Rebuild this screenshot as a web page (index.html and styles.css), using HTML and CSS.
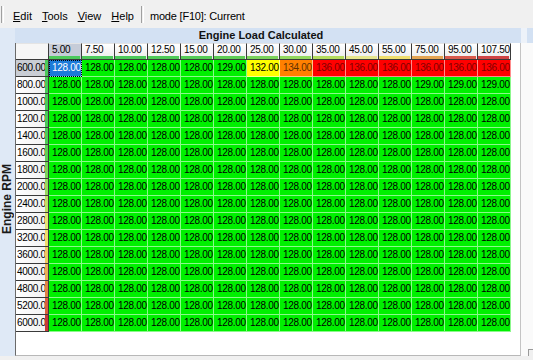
FILE: index.html
```html
<!DOCTYPE html>
<html lang="en">
<head>
    <meta charset="UTF-8">
    <meta name="viewport" content="width=device-width, initial-scale=1.0">
    <title>Engine Load Calculated</title>
    <link rel="stylesheet" href="styles.css">
</head>
<body>
    <!-- Menu Bar -->
    <div class="menubar">
        <span class="grip"></span>
        <span class="menu-item"><u>E</u>dit</span>
        <span class="menu-item"><u>T</u>ools</span>
        <span class="menu-item"><u>V</u>iew</span>
        <span class="menu-item"><u>H</u>elp</span>
        <span class="menu-sep"></span>
        <span class="menu-mode">mode [F10]: Current</span>
    </div>

    <div class="workspace">
        <!-- Y axis label -->
        <div class="axis-y">
            <span class="axis-y-label">Engine RPM</span>
        </div>

        <!-- Table -->
        <div class="table-pane">
            <div class="table-title">Engine Load Calculated</div>
            <div class="grid-box">
                <div class="grid" id="grid"></div>
            </div>
        </div>

        <!-- Second pane, cut off on the right -->
        <div class="side-pane">
            <div class="side-title"></div>
            <div class="side-body">
                <div class="side-box"></div>
            </div>
        </div>
    </div>

    <div class="statusbar"></div>

<script>
document.addEventListener("DOMContentLoaded", () => {
    const grid = document.getElementById("grid");

    const cols = ["5.00", "7.50", "10.00", "12.50", "15.00", "20.00", "25.00",
                  "30.00", "35.00", "45.00", "55.00", "75.00", "95.00", "107.50"];
    const colBars = ["#4cc95a", "#4cc95a", "#4cc95a", "#4fca58", "#55cb56", "#5ecd54", "#7ad25a",
                     "#92d85e", "#b4dc5c", "#e6e68c", "#f0de6c", "#e4a452", "#d85a4c", "#cf4444"];

    const rows = ["600.00", "800.00", "1000.00", "1200.00", "1400.00", "1600.00", "1800.00", "2000.00",
                  "2400.00", "2800.00", "3200.00", "3600.00", "4000.00", "4800.00", "5200.00", "6000.00"];
    const rowBars = ["#4cc95a", "#4cc95a", "#4cc95a", "#4cc95a", "#50ca58", "#62ce56", "#7cd25a", "#98d860",
                     "#c0de66", "#e4e276", "#efdc6c", "#eec862", "#e8ae56", "#e08446", "#d8603e", "#c83a36"];

    // all 128 unless listed here
    const values = rows.map(() => cols.map(() => 128));
    values[0] = [128, 128, 128, 128, 128, 129, 132, 134, 136, 136, 136, 136, 136, 136];
    values[1][11] = 129;
    values[1][12] = 129;
    values[1][13] = 129;

    function cellClass(v) {
        if (v >= 136) return "cell hot";
        if (v >= 134) return "cell warm";
        if (v >= 132) return "cell mild";
        return "cell ok";
    }

    // header row
    const corner = document.createElement("div");
    corner.className = "corner";
    grid.appendChild(corner);

    cols.forEach((c, i) => {
        const h = document.createElement("div");
        h.className = i === 0 ? "colhead selected" : "colhead";
        h.innerHTML = '<span class="colhead-text">' + c + '</span><i class="colhead-bar"></i>';
        h.querySelector(".colhead-bar").style.background = colBars[i];
        grid.appendChild(h);
    });

    // data rows
    rows.forEach((r, ri) => {
        const h = document.createElement("div");
        h.className = ri === 0 ? "rowhead selected" : "rowhead";
        h.innerHTML = '<span class="rowhead-text">' + r + '</span><i class="rowhead-bar"></i>';
        h.querySelector(".rowhead-bar").style.background = rowBars[ri];
        grid.appendChild(h);

        values[ri].forEach((v, ci) => {
            const c = document.createElement("div");
            c.className = cellClass(v);
            if (ri === 0 && ci === 0) c.className += " current";
            c.textContent = v.toFixed(2);
            grid.appendChild(c);
        });
    });
});
</script>

</body>
</html>
```

FILE: styles.css
```css
/* General Page Styling */
body {
    margin: 0;
    width: 533px;
    height: 360px;
    overflow: hidden;
    font-family: "Liberation Sans", Arial, sans-serif;
    font-size: 11px;
    color: #000;
    background: #f0f0f0;
    display: flex;
    flex-direction: column;
}

/* Menu Bar */
.menubar {
    height: 24px;
    padding-top: 4px;
    line-height: 24px;
    display: flex;
    align-items: flex-start;
    background: #f0f0f0;
}

.grip,
.menu-sep {
    width: 1px;
    height: 17px;
    margin-top: 2px;
    border-left: 1px solid #a0a0a0;
    border-right: 1px solid #ffffff;
}

.grip {
    margin-left: 1px;
    margin-right: 5px;
}

.menu-item {
    padding: 0 4px;
    margin-right: 2px;
}

.menu-item u {
    text-underline-offset: 1px;
}

.menu-sep {
    margin-left: 1px;
    margin-right: 6px;
}

.menu-mode {
    letter-spacing: -0.2px;
}

/* Work area below the menu */
.workspace {
    height: 328px;
    display: flex;
    background: #dfe9f6;
}

.axis-y {
    width: 15px;
    padding-top: 15px;
    display: flex;
    align-items: center;
    justify-content: center;
}

.axis-y-label {
    writing-mode: vertical-rl;
    transform: rotate(180deg);
    font-size: 12px;
    font-weight: bold;
    color: #1a1a1a;
    margin-right: 2px;
}

.table-pane {
    width: 506px;
    display: flex;
    flex-direction: column;
}

.table-title {
    height: 15px;
    line-height: 15px;
    padding-right: 14px;
    text-align: center;
    font-weight: bold;
    background: #d3e1f3;
    color: #111;
}

.grid-box {
    flex: 1;
    background: #ffffff;
    border-left: 1px solid #6a6a6a;
    border-right: 1px solid #c4c4c4;
    border-bottom: 1px solid #b8b8b8;
}

/* Table grid */
.grid {
    display: grid;
    grid-template-columns: repeat(15, 33px);
    grid-auto-rows: 17px;
    font-size: 10px;
    letter-spacing: -0.3px;
}

.grid > div {
    box-sizing: border-box;
    white-space: nowrap;
    overflow: hidden;
}

.corner {
    background: #f6f6f6;
    border-top: 1px solid #e4e4e4;
    border-right: 1px solid #3a3a3a;
    border-bottom: 1px solid #3a3a3a;
}

.colhead {
    display: flex;
    flex-direction: column;
    justify-content: flex-end;
    border-top: 1px solid #e4e4e4;
    border-right: 1px solid #3a3a3a;
    border-bottom: 1px solid #3a3a3a;
    background: linear-gradient(#ffffff, #ebebeb);
}

.colhead.selected {
    background: #c6ccd8;
}

.colhead-text {
    line-height: 12px;
    padding-left: 3px;
}

.colhead-bar {
    height: 3px;
    margin: 0 1px 0 0;
}

.rowhead {
    display: flex;
    border-right: 1px solid #3a3a3a;
    border-bottom: 1px solid #3a3a3a;
    background: linear-gradient(90deg, #ffffff, #f0f0f0);
}

.rowhead.selected {
    background: #c9cdd4;
}

.rowhead-text {
    flex: 1;
    overflow: hidden;
    line-height: 16px;
    padding-left: 1px;
}

.rowhead-bar {
    width: 3px;
    flex: none;
}

/* Data cells */
.cell {
    line-height: 16px;
    padding-left: 3px;
    border-right: 1px solid rgba(255, 255, 255, 0.55);
    border-bottom: 1px solid rgba(255, 255, 255, 0.55);
}

.cell.ok {
    background: #00f000;
}

.cell.mild {
    background: #ffff00;
}

.cell.warm {
    background: #ff8000;
    color: #603000;
}

.cell.hot {
    background: #ff0000;
    color: #800000;
}

.cell.current {
    background: #1c7ad8;
    color: #ffffff;
    outline: 1px dotted #000;
    outline-offset: -1px;
}

/* Right pane (cut off) */
.side-pane {
    flex: 1;
    display: flex;
    flex-direction: column;
    padding-left: 6px;
    background: #edf2f9;
}

.side-title {
    height: 15px;
    background: #d3e1f3;
}

.side-body {
    flex: 1;
    margin-left: -6px;
    background: #fafafa;
    display: flex;
    flex-direction: column;
    justify-content: flex-end;
}

.side-box {
    height: 6px;
    margin-left: 7px;
    border-top: 1px solid #9a9a9a;
    border-left: 1px solid #9a9a9a;
    background: #f0f0f0;
}

/* Bottom strip */
.statusbar {
    height: 4px;
    background: #f0f0f0;
}
```
